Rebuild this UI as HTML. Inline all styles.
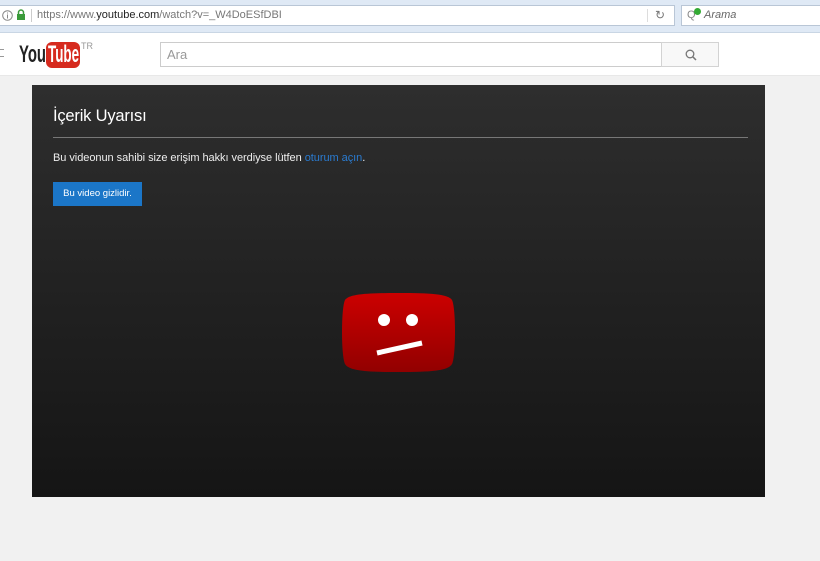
<!DOCTYPE html>
<html><head><meta charset="utf-8"><style>
*{margin:0;padding:0;box-sizing:border-box}
body{width:820px;height:561px;background:#f1f1f1;font-family:"Liberation Sans",Arial,sans-serif;position:relative;overflow:hidden}
.bar{position:absolute;left:0;top:0;width:820px;height:33px;background:#dfe9f5;border-bottom:1px solid #c9d6e4}
.url{position:absolute;left:0;top:5px;width:675px;height:21px;background:#fff;border:1px solid #b9c6d6;border-left:none;font-size:11px;line-height:19px;color:#777}
.srch{position:absolute;left:681px;top:5px;width:139px;height:21px;background:#fff;border:1px solid #b9c6d6;border-right:none;font-size:11px;line-height:19px;color:#666;font-style:italic}
.hdr{position:absolute;left:0;top:33px;width:820px;height:43px;background:#fff;border-bottom:1px solid #e8e8e8}
.panel{position:absolute;left:32px;top:85px;width:733px;height:412px;background:linear-gradient(#2e2e2e,#151515)}
.nar{display:inline-block;transform-origin:left;white-space:nowrap}
</style></head><body>
<div class="bar">
 <div class="url">
  <svg style="position:absolute;left:2px;top:4px" width="11" height="11"><circle cx="5.5" cy="5.5" r="4.8" fill="none" stroke="#888"/><rect x="5" y="4.5" width="1" height="4" fill="#888"/><rect x="5" y="2.5" width="1" height="1" fill="#888"/></svg>
  <svg style="position:absolute;left:16px;top:3px" width="10" height="12"><path d="M2.5 5V3.5a2.5 2.5 0 015 0V5" fill="none" stroke="#3a9b3a" stroke-width="1.5"/><rect x="1" y="5" width="8" height="6" fill="#3a9b3a"/></svg>
  <div style="position:absolute;left:31px;top:3px;width:1px;height:13px;background:#ccc"></div>
  <span style="position:absolute;left:37px">https://www.<b style="color:#222;font-weight:normal">youtube.com</b>/watch?v=_W4DoESfDBI</span>
  <div style="position:absolute;left:647px;top:3px;width:1px;height:13px;background:#ddd"></div>
  <span style="position:absolute;left:655px;color:#777;font-style:normal;font-size:12px">&#8635;</span>
 </div>
 <div class="srch"><span style="position:absolute;left:5px;color:#888;font-style:normal">Q</span><span style="position:absolute;left:12px;top:2px;width:7px;height:7px;border-radius:50%;background:#3a3"></span><span style="position:absolute;left:22px">Arama</span></div>
</div>
<div class="hdr">
 <div style="position:absolute;left:0;top:16px;width:4px;height:8px;border-top:1px solid #999;border-bottom:1px solid #999"></div>
 <div style="position:absolute;left:19px;top:8px;font-size:24px;font-weight:bold;color:#222;line-height:28px"><span class="nar" style="transform:scaleX(.62)">You</span></div>
 <div style="position:absolute;left:46px;top:9px;width:34px;height:26px;background:#d62a1e;border-radius:6px;color:#fff;font-size:24px;font-weight:bold;line-height:26px;overflow:hidden;padding-left:2px"><span class="nar" style="transform:scaleX(.56)">Tube</span></div>
 <div style="position:absolute;left:81px;top:8px;font-size:9px;color:#999">TR</div>
 <div style="position:absolute;left:160px;top:9px;width:502px;height:25px;border:1px solid #ccc;background:#fff;font-size:13px;color:#999;line-height:23px;padding-left:6px">Ara</div>
 <div style="position:absolute;left:661px;top:9px;width:58px;height:25px;border:1px solid #d3d3d3;background:#f8f8f8">
  <svg style="position:absolute;left:23px;top:6px" width="12" height="12"><circle cx="5" cy="5" r="3.8" fill="none" stroke="#777" stroke-width="1.3"/><path d="M7.8 7.8L11 11" stroke="#777" stroke-width="1.5"/></svg>
 </div>
</div>
<div class="panel">
 <div style="position:absolute;left:21px;top:22px;font-size:16.5px;color:#fff;letter-spacing:-0.2px">İçerik Uyarısı</div>
 <div style="position:absolute;left:21px;top:52px;width:695px;height:1px;background:#777"></div>
 <div style="position:absolute;left:21px;top:67px;font-size:11px;color:#eee;letter-spacing:-0.05px">Bu videonun sahibi size erişim hakkı verdiyse lütfen <span style="color:#2a7bd0">oturum açın</span>.</div>
 <div style="position:absolute;left:21px;top:97px;width:89px;height:24px;background:#1b76c8;color:#fff;font-size:9.5px;line-height:24px;text-align:center">Bu video gizlidir.</div>
 <svg style="position:absolute;left:308px;top:207px" width="117" height="81">
  <defs><linearGradient id="g" x1="0" y1="0" x2="0" y2="1"><stop offset="0" stop-color="#c00"/><stop offset="1" stop-color="#920000"/></linearGradient></defs>
  <path d="M58.5 1C90 1 108 2 112 8c4 8 4 56 0 64-4 7-22 8-53.5 8S9 79 5 72C1 64 1 16 5 8 9 2 27 1 58.5 1z" fill="url(#g)"/>
  <circle cx="44" cy="28" r="6" fill="#fff"/><circle cx="72" cy="28" r="6" fill="#fff"/>
  <path d="M37 61L82 51" stroke="#fff" stroke-width="5"/>
 </svg>
</div>
</body></html>
